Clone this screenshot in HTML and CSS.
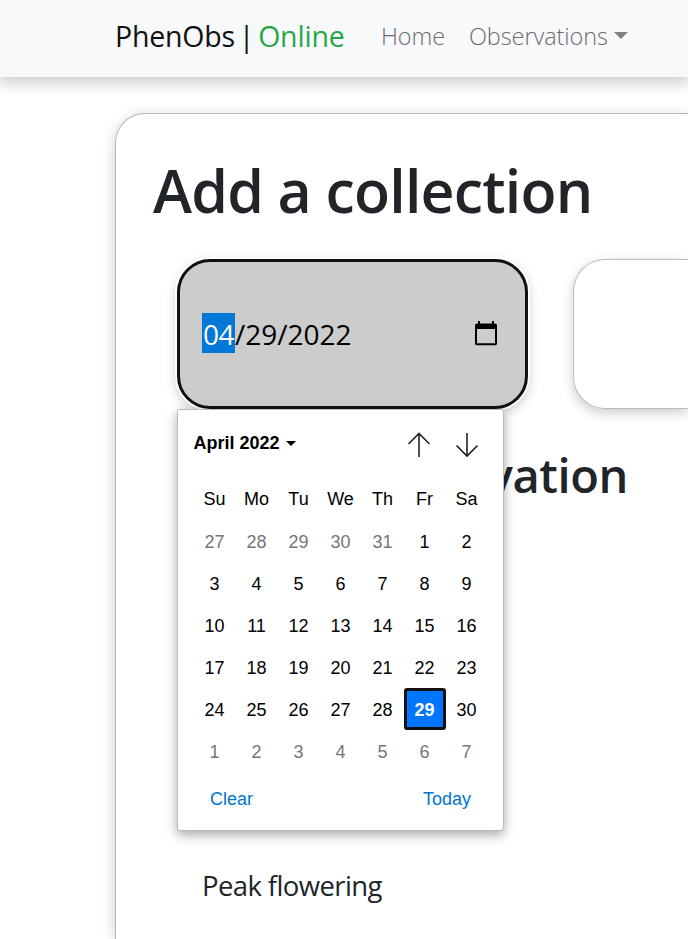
FILE: index.html
```html
<!DOCTYPE html>
<html lang="en">
<head>
<meta charset="utf-8">
<title>PhenObs Online</title>
<link rel="stylesheet" href="styles.css">
</head>
<body>
<nav class="navbar">
  <a class="brand">PhenObs | <span class="green">Online</span></a>
  <a class="link home">Home</a>
  <a class="link obs">Observations</a>
  <span class="caret"></span>
</nav>
<main class="card">
  <h1>Add a collection</h1>
  <div class="fields">
    <div class="date">
      <span class="value"><span class="month">04</span><span class="rest">/29/2022</span></span>
      <svg class="cal-icon" width="22" height="25" viewBox="0 0 22 25"><path fill="#000" fill-rule="evenodd" d="M3 0h2v2.500h12V0h2v2.500h1a2 2 0 0 1 2 2V22.500a1.700 1.700 0 0 1-1.700 1.700H1.700A1.700 1.700 0 0 1 0 22.500V4.500a2 2 0 0 1 2-2h1zM2 8v14.200h18V8z"/></svg>
      <div class="picker">
        <div class="picker-head">
          <span class="period">April 2022</span><span class="down"></span>
          <svg class="arrow" width="24" height="26" viewBox="0 0 24 26"><path d="M12 25V1.500M1.500 12L12 1.500L22.500 12"/></svg>
          <svg class="arrow" width="24" height="26" viewBox="0 0 24 26"><path d="M12 1V24M1.500 13.500L12 24L22.500 13.500"/></svg>
        </div>
        <div class="week names"><span>Su</span><span>Mo</span><span>Tu</span><span>We</span><span>Th</span><span>Fr</span><span>Sa</span></div>
        <div class="week"><span class="out">27</span><span class="out">28</span><span class="out">29</span><span class="out">30</span><span class="out">31</span><span>1</span><span>2</span></div>
        <div class="week"><span>3</span><span>4</span><span>5</span><span>6</span><span>7</span><span>8</span><span>9</span></div>
        <div class="week"><span>10</span><span>11</span><span>12</span><span>13</span><span>14</span><span>15</span><span>16</span></div>
        <div class="week"><span>17</span><span>18</span><span>19</span><span>20</span><span>21</span><span>22</span><span>23</span></div>
        <div class="week"><span>24</span><span>25</span><span>26</span><span>27</span><span>28</span><span class="selected">29</span><span>30</span></div>
        <div class="week"><span class="out">1</span><span class="out">2</span><span class="out">3</span><span class="out">4</span><span class="out">5</span><span class="out">6</span><span class="out">7</span></div>
        <div class="actions"><span>Clear</span><span>Today</span></div>
      </div>
    </div>
    <div class="box"></div>
  </div>
  <h2>Add observation</h2>
  <p class="label">Peak flowering</p>
</main>
</body>
</html>
```
FILE: styles.css
```css
* { box-sizing: border-box; }
body {
  margin: 0;
  height: 939px;
  overflow: hidden;
  background: #fff;
  color: #212529;
  font-family: "Segoe UI", "Open Sans", sans-serif;
}
.navbar {
  display: flex;
  align-items: center;
  height: 77px;
  padding: 0 0 4px 115px;
  background: #f8f9fb;
  box-shadow: 0 4px 14px 2px rgba(0, 0, 0, .2);
  white-space: nowrap;
}
.brand { width: 266px; padding-bottom: 1px; font-size: 28.5px; color: #111; letter-spacing: -.2px; word-spacing: -3.3px; }
.green { color: #28a745; }
.link { font-size: 23.5px; color: #6c6d6f; font-weight: 300; letter-spacing: -.1px; padding-bottom: 1px; }
.home { width: 88px; }
.obs { width: 145px; }
.caret { margin-top: -3px; border: 7px solid transparent; border-top-color: #808183; border-bottom: 0; }
.card {
  height: 826px;
  margin: 36px 0 0 115px;
  padding: 36px 0 0 37px;
  border: 1px solid #b8b8b8;
  border-width: 1px 0 0 1px;
  border-radius: 30px 0 0 0;
  background: #fff;
  box-shadow: 0 3px 14px rgba(0, 0, 0, .2);
}
h1, h2, p { margin: 0; white-space: nowrap; }
h1 { height: 109px; font-size: 59px; line-height: 80px; font-weight: 600; letter-spacing: -.8px; }
.fields { display: flex; gap: 45px; margin-left: 24px; }
.date {
  position: relative;
  display: flex;
  align-items: center;
  justify-content: space-between;
  width: 351px;
  height: 150px;
  padding: 0 28px 2px 22px;
  border: 3px solid #101010;
  border-radius: 33px;
  background: #ccc;
  color: #000;
  box-shadow: 0 0 0 2px #fff, 0 4px 12px rgba(0, 0, 0, .25);
}
.value { display: flex; font-size: 28px; line-height: 40px; letter-spacing: 0; }
.rest { padding-top: 1px; line-height: 40px; }
.month { width: 33px; height: 40px; padding-left: 1px; background: #0078d7; color: #fff; letter-spacing: -.5px; line-height: 42px; }
.cal-icon { display: block; }
.box {
  flex: 1;
  height: 150px;
  border: 1px solid #bbb;
  border-right: 0;
  border-radius: 32px 0 0 32px;
  box-shadow: 0 4px 12px rgba(0, 0, 0, .2);
}
.picker {
  position: absolute;
  left: -3px;
  top: 147px;
  width: 327px;
  height: 422px;
  padding: 0 15px 0 16px;
  border: 1px solid #bbb;
  border-radius: 3px;
  background: #fff;
  box-shadow: 0 4px 12px rgba(0, 0, 0, .35);
  font: 18px "Liberation Sans", Arial, sans-serif;
}
.picker-head { display: flex; align-items: center; height: 68px; padding-bottom: 2px; }
.period { margin-left: -.5px; font-weight: bold; }
.down { margin: 0 auto 0 6px; border: 5px solid transparent; border-top-color: #000; border-bottom: 0; }
.arrow { margin-right: 9px; margin-top: 4px; fill: none; stroke: #222; stroke-width: 1.6; }
.arrow + .arrow { margin-left: 15px; }
.week { display: grid; grid-template-columns: repeat(7, 42px); margin-left: -.5px; }
.week span { height: 42px; line-height: 42px; text-align: center; }
.names { height: 43px; }
.week .out { color: #757575; }
.week .selected {
  margin-top: -1px;
  border: 3px solid #101010;
  border-radius: 3px;
  background: #0075ff;
  color: #fff;
  font-weight: bold;
  line-height: 38px;
}
.actions { display: flex; justify-content: space-between; padding: 5px 17px 5px 16px; line-height: 42px; color: #0075cf; }
h2 { width: 475px; margin-top: 31px; text-align: right; font-size: 47px; line-height: 70px; font-weight: 600; letter-spacing: -.4px; }
.label { margin: 355px 0 0 49px; font-size: 27.5px; line-height: 42px; letter-spacing: -.6px; }
```
